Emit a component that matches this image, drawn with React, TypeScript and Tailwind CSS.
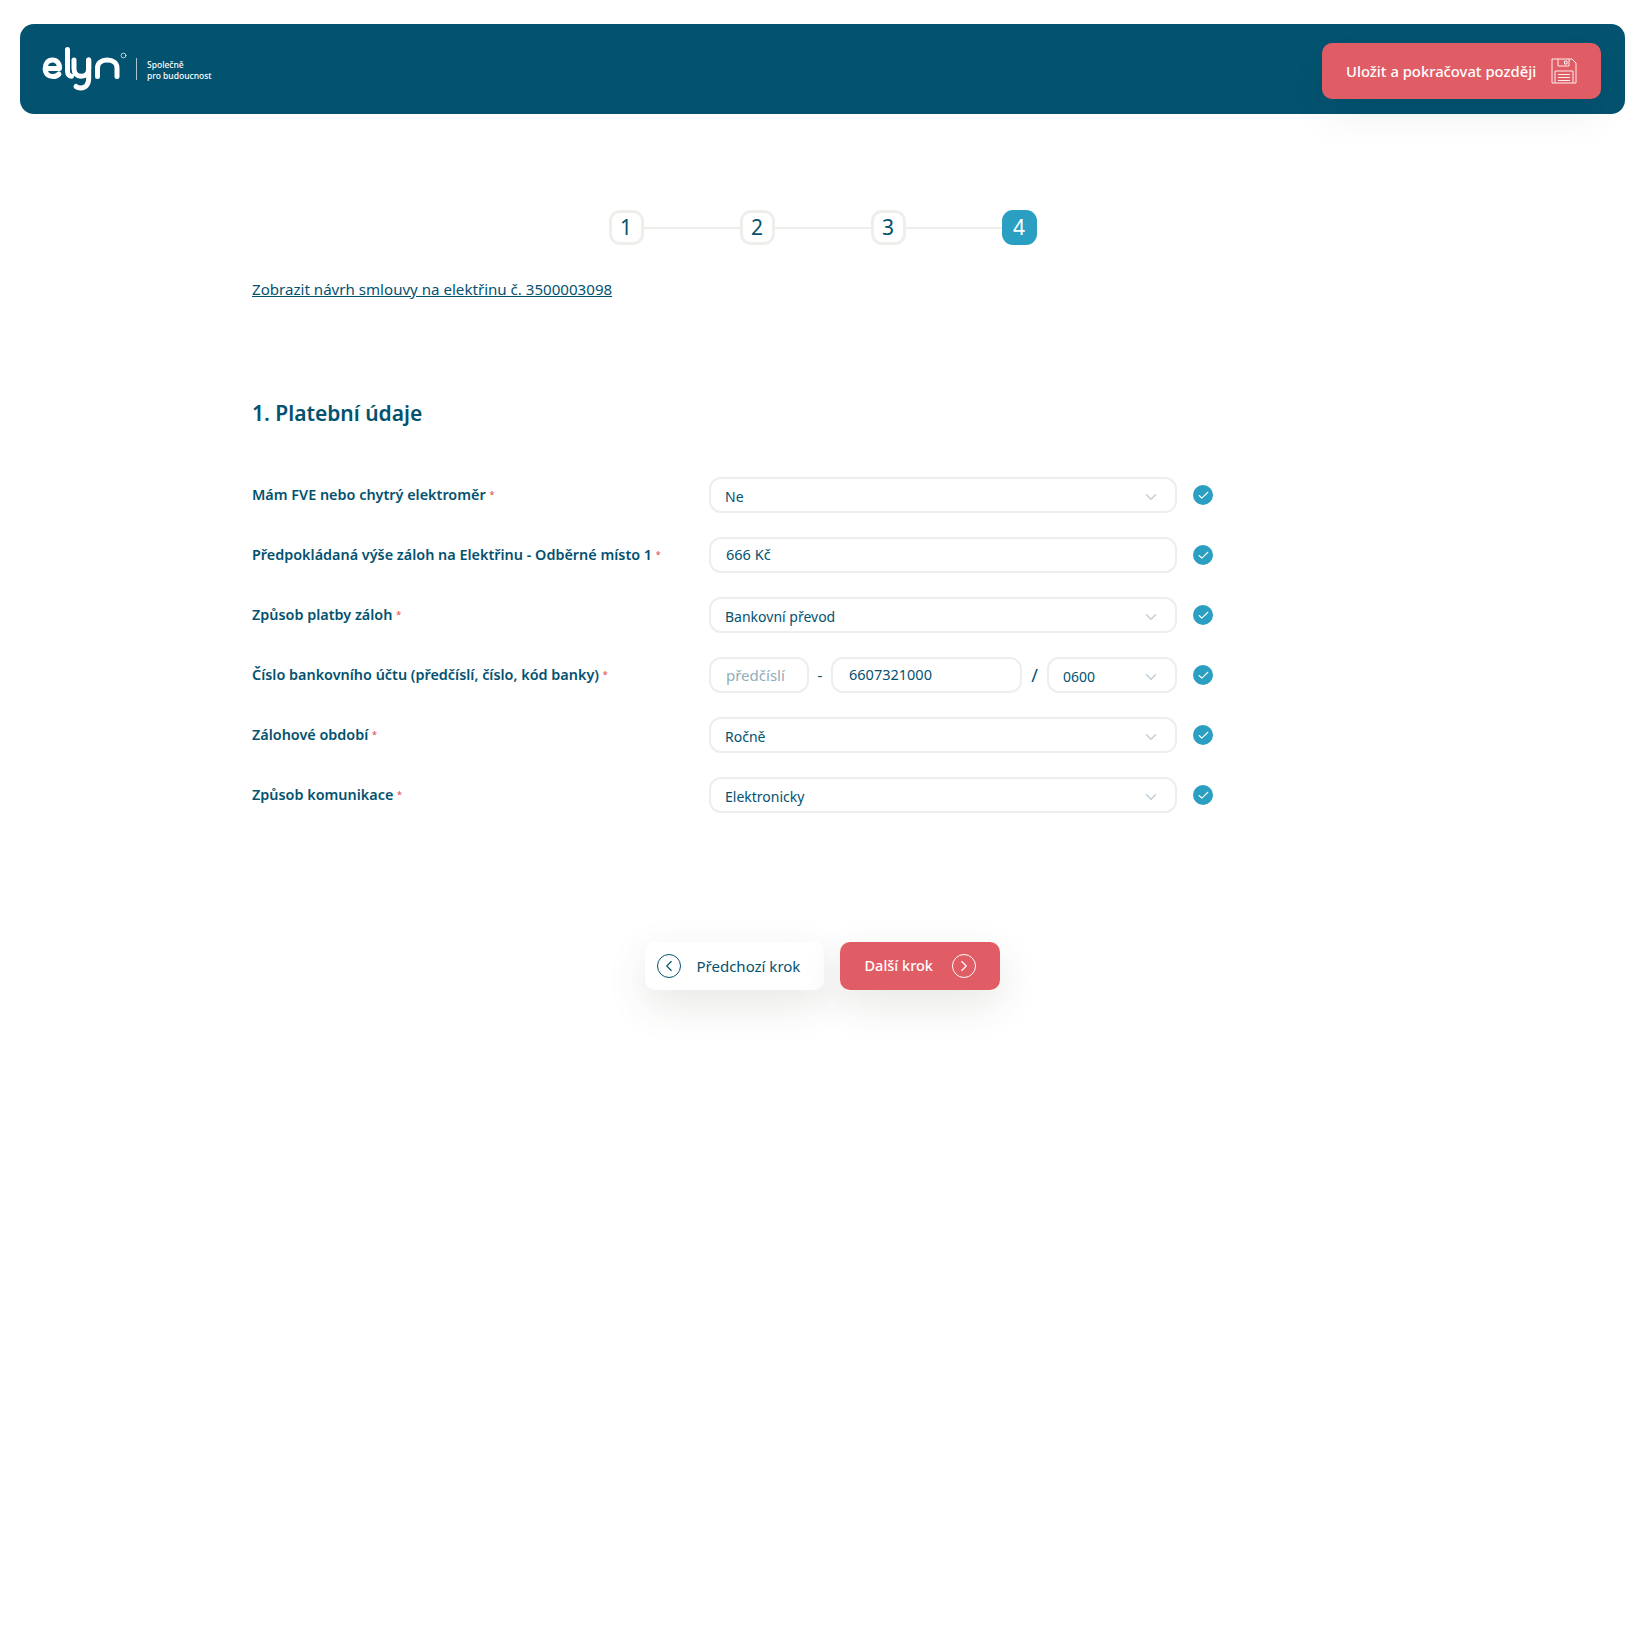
import { Check, ChevronDown, ChevronLeft, ChevronRight } from "lucide-react"

const font = "font-['Noto_Sans',sans-serif]"

const fieldBox =
  "h-[36px] rounded-[12px] border-2 border-[#eeeeea] bg-white text-[14.5px] text-[#03526f] flex items-center"

function Logo() {
  return (
    <svg width="90" height="50" viewBox="0 0 90 50" fill="none" stroke="#fff" strokeWidth="5" strokeLinecap="round" strokeLinejoin="round">
      <path d="M3.500 24.500h14c.4-5-2.800-8.500-7-8.500C6 16 3.200 19.500 3.200 24.500S6.300 32.500 11 32.500c2.500 0 4.500-.8 6-2.500" />
      <path d="M25.500 5.500v21c0 3.800 1.500 5.500 4 5.800" />
      <path d="M32 16v8.500c0 5 3 7.800 7.300 7.800s7.400-2.800 7.400-7.800V16" />
      <path d="M46.700 16v18c0 6.500-3 10-8 10-2 0-3.500-.5-4.700-1.500" />
      <path d="M55.500 32.500V24c0-5 3.800-8 9.700-8s9.800 3 9.800 8v8.500" />
      <circle cx="81.500" cy="11.500" r="2.400" strokeWidth="0.7" />
    </svg>
  )
}

function Floppy() {
  return (
    <svg width="26" height="26" viewBox="0 0 26 26" fill="none" stroke="#fff" strokeWidth="1" opacity="0.9">
      <path d="M1 1h20l4 4v20H1z" />
      <path d="M7 1v7h11V1" />
      <path d="M13.500 3h2.500v3h-2.500z" />
      <path d="M4 25V13h18v12" />
      <path d="M7 16.500h12M7 19.500h12M7 22.500h12" />
    </svg>
  )
}

function Step({ n, active }: { n: number; active?: boolean }) {
  return (
    <div
      className={`w-[35px] h-[35px] rounded-[11px] border-[3px] flex items-center justify-center text-[21px] leading-none shrink-0 ${
        active ? "bg-[#2a9fc2] border-[#2a9fc2] text-white" : "bg-white border-[#eeeeea] text-[#03526f]"
      }`}
    >
      {n}
    </div>
  )
}

function Select({ value, className = "" }: { value: string; className?: string }) {
  return (
    <div className={`${fieldBox} !text-[14px] pl-[14px] pr-[15px] justify-between ${className}`}>
      <span className="pt-[2px]">{value}</span>
      <ChevronDown className="w-[18px] h-[18px] text-[#c3d0d7] mt-[3px]" strokeWidth={2} />
    </div>
  )
}

function Row({ label, children }: { label: string; children: React.ReactNode }) {
  return (
    <div className="flex items-center h-[36px]">
      <label className="w-[457px] shrink-0 text-[14.4px] font-semibold text-[#03526f] whitespace-nowrap">
        {label} <span className="text-[#e15d65] text-[9px] align-[2px]">*</span>
      </label>
      <div className="w-[468px] shrink-0">{children}</div>
      <div className="ml-[16px] w-[20px] h-[20px] rounded-full bg-[#2a9fc2] flex items-center justify-center">
        <Check className="w-[13px] h-[13px] text-white" strokeWidth={2} />
      </div>
    </div>
  )
}

export default function App() {
  return (
    <div className={`min-h-[1627px] bg-white pt-[24px] ${font}`}>
      <header className="mx-[20px] h-[90px] rounded-[14px] bg-[#03526f] flex items-center justify-between pl-[22px] pr-[24px]">
        <div className="flex items-center">
          <Logo />
          <div className="w-px h-[22px] bg-[#a9c4cf] ml-[4px]" />
          <div className="ml-[10px] pt-[2px] text-[8.500px] leading-[11.500px] font-medium text-white">
            <div>Společně</div>
            <div>pro budoucnost</div>
          </div>
        </div>
        <button className="mt-[4px] w-[279px] h-[56px] rounded-[10px] bg-[#e15d65] flex items-center justify-between pl-[24px] pr-[24px] text-[14.8px] font-medium text-white shadow-[0_20px_40px_rgba(0,0,0,0.05)]">
          Uložit a pokračovat později
          <Floppy />
        </button>
      </header>

      <div className="mt-[96px] flex items-center justify-center">
        <div className="flex items-center">
          <Step n={1} />
          <div className="w-[96px] h-[2px] bg-[#eeeeea]" />
          <Step n={2} />
          <div className="w-[96px] h-[2px] bg-[#eeeeea]" />
          <Step n={3} />
          <div className="w-[96px] h-[2px] bg-[#eeeeea]" />
          <Step n={4} active />
        </div>
      </div>

      <main className="ml-[252px] w-[961px]">
        <a className="block mt-[33px] text-[15.1px] leading-[22px] text-[#03526f] underline">
          Zobrazit návrh smlouvy na elektřinu č. 3500003098
        </a>

        <h2 className="mt-[98px] text-[21px] leading-[30px] font-semibold text-[#03526f]">1. Platební údaje</h2>

        <div className="mt-[49px] flex flex-col gap-[24px]">
          <Row label="Mám FVE nebo chytrý elektroměr">
            <Select value="Ne" />
          </Row>
          <Row label="Předpokládaná výše záloh na Elektřinu - Odběrné místo 1">
            <div className={`${fieldBox} pl-[15px]`}>666 Kč</div>
          </Row>
          <Row label="Způsob platby záloh">
            <Select value="Bankovní převod" />
          </Row>
          <Row label="Číslo bankovního účtu (předčíslí, číslo, kód banky)">
            <div className="flex items-center">
              <div className={`${fieldBox} w-[100px] pl-[15px] !text-[15px] !text-[#8fadbb]`}>předčíslí</div>
              <span className="w-[22px] text-center text-[15px] text-[#03526f]">-</span>
              <div className={`${fieldBox} w-[191px] pl-[16px]`}>6607321000</div>
              <span className="w-[25px] text-center text-[18px] text-[#03526f]">/</span>
              <Select value="0600" className="w-[130px]" />
            </div>
          </Row>
          <Row label="Zálohové období">
            <Select value="Ročně" />
          </Row>
          <Row label="Způsob komunikace">
            <Select value="Elektronicky" />
          </Row>
        </div>
      </main>

      <div className="mt-[129px] flex justify-center gap-[16px] pr-[1px]">
        <button className="w-[179px] h-[48px] rounded-[10px] bg-white flex items-center pl-[12px] text-[15px] text-[#03526f] shadow-[0_14px_40px_rgba(60,55,40,0.12)]">
          <span className="w-[24px] h-[24px] rounded-full border border-[#03526f] flex items-center justify-center">
            <ChevronLeft className="w-[18px] h-[18px]" strokeWidth={1.500} />
          </span>
          <span className="ml-[16px]">Předchozí krok</span>
        </button>
        <button className="w-[160px] h-[48px] rounded-[10px] bg-[#e15d65] flex items-center justify-between pl-[25px] pr-[24px] text-[14.5px] font-medium text-white shadow-[0_14px_40px_rgba(60,55,40,0.12)]">
          Další krok
          <span className="w-[24px] h-[24px] rounded-full border border-white flex items-center justify-center">
            <ChevronRight className="w-[18px] h-[18px]" strokeWidth={1.500} />
          </span>
        </button>
      </div>
    </div>
  )
}
